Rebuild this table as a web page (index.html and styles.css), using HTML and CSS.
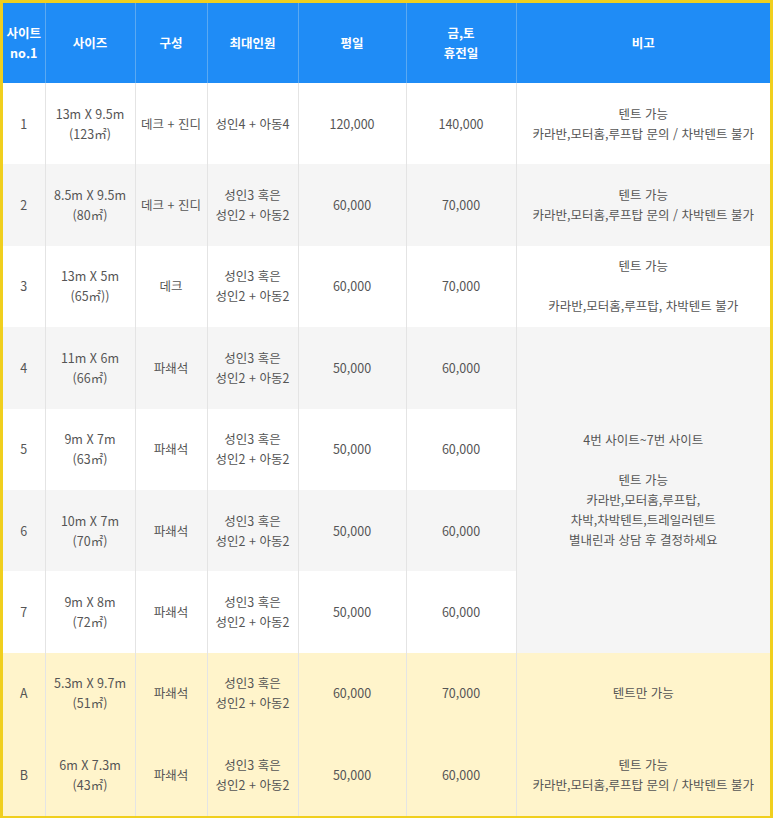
FILE: index.html
```html
<!DOCTYPE html>
<html lang="ko">
<head>
<meta charset="utf-8">
<link rel="stylesheet" href="styles.css">
</head>
<body>
<div class="frame">
<table class="price">
  <colgroup>
    <col class="c1"><col class="c2"><col class="c3"><col class="c4"><col class="c5"><col class="c6"><col class="c7">
  </colgroup>
  <thead>
    <tr>
      <th>사이트<br>no.1</th>
      <th>사이즈</th>
      <th>구성</th>
      <th>최대인원</th>
      <th>평일</th>
      <th>금,토<br>휴전일</th>
      <th>비고</th>
    </tr>
  </thead>
  <tbody>
    <tr class="white">
      <td>1</td>
      <td>13m X 9.5m<br>(123㎡)</td>
      <td>데크 + 진디</td>
      <td>성인4 + 아동4</td>
      <td>120,000</td>
      <td>140,000</td>
      <td>텐트 가능<br>카라반,모터홈,루프탑 문의 / 차박텐트 불가</td>
    </tr>
    <tr class="gray">
      <td>2</td>
      <td>8.5m X 9.5m<br>(80㎡)</td>
      <td>데크 + 진디</td>
      <td>성인3 혹은<br>성인2 + 아동2</td>
      <td>60,000</td>
      <td>70,000</td>
      <td>텐트 가능<br>카라반,모터홈,루프탑 문의 / 차박텐트 불가</td>
    </tr>
    <tr class="white">
      <td>3</td>
      <td>13m X 5m<br>(65㎡))</td>
      <td>데크</td>
      <td>성인3 혹은<br>성인2 + 아동2</td>
      <td>60,000</td>
      <td>70,000</td>
      <td>텐트 가능<br><br>카라반,모터홈,루프탑, 차박텐트 불가</td>
    </tr>
    <tr class="gray">
      <td>4</td>
      <td>11m X 6m<br>(66㎡)</td>
      <td>파쇄석</td>
      <td>성인3 혹은<br>성인2 + 아동2</td>
      <td>50,000</td>
      <td>60,000</td>
      <td rowspan="4" class="merged">4번 사이트~7번 사이트<br><br>텐트 가능<br>카라반,모터홈,루프탑,<br>차박,차박텐트,트레일러텐트<br>별내린과 상담 후 결정하세요</td>
    </tr>
    <tr class="white">
      <td>5</td>
      <td>9m X 7m<br>(63㎡)</td>
      <td>파쇄석</td>
      <td>성인3 혹은<br>성인2 + 아동2</td>
      <td>50,000</td>
      <td>60,000</td>
    </tr>
    <tr class="gray">
      <td>6</td>
      <td>10m X 7m<br>(70㎡)</td>
      <td>파쇄석</td>
      <td>성인3 혹은<br>성인2 + 아동2</td>
      <td>50,000</td>
      <td>60,000</td>
    </tr>
    <tr class="white">
      <td>7</td>
      <td>9m X 8m<br>(72㎡)</td>
      <td>파쇄석</td>
      <td>성인3 혹은<br>성인2 + 아동2</td>
      <td>50,000</td>
      <td>60,000</td>
    </tr>
    <tr class="yellow">
      <td>A</td>
      <td>5.3m X 9.7m<br>(51㎡)</td>
      <td>파쇄석</td>
      <td>성인3 혹은<br>성인2 + 아동2</td>
      <td>60,000</td>
      <td>70,000</td>
      <td>텐트만 가능</td>
    </tr>
    <tr class="yellow">
      <td>B</td>
      <td>6m X 7.3m<br>(43㎡)</td>
      <td>파쇄석</td>
      <td>성인3 혹은<br>성인2 + 아동2</td>
      <td>50,000</td>
      <td>60,000</td>
      <td>텐트 가능<br>카라반,모터홈,루프탑 문의 / 차박텐트 불가</td>
    </tr>
  </tbody>
</table>
</div>
</body>
</html>
```

FILE: styles.css
```css
html, body {
  margin: 0;
  padding: 0;
  background: #ffffff;
}

.frame {
  width: 767px;
  border-style: solid;
  border-color: #f0cf1e;
  border-width: 3px 3px 2px 3px;
  overflow: hidden;
}

.price {
  width: 767px;
  border-collapse: collapse;
  table-layout: fixed;
  font-family: "Noto Sans CJK KR", "Noto Sans", sans-serif;
  font-size: 12.5px;
  line-height: 20px;
  color: #555555;
  text-align: center;
}

.c1 { width: 42px; }
.c2 { width: 90px; }
.c3 { width: 72px; }
.c4 { width: 91px; }
.c5 { width: 108px; }
.c6 { width: 110px; }
.c7 { width: 254px; }

.price th {
  height: 80px;
  padding: 0;
  background: #1f8cf6;
  color: #ffffff;
  font-weight: 700;
  font-size: 12.5px;
  border-left: 1px solid #5aa9f2;
  vertical-align: middle;
}

.price th:first-child {
  border-left: none;
}

.price td {
  height: 81.4px;
  padding: 0;
  border: 1px solid #e4e4e4;
  border-top: none;
  border-bottom: none;
  vertical-align: middle;
}

.price td:first-child {
  border-left: none;
}

.price td:last-child {
  border-right: none;
}

.white td { background: #ffffff; }
.gray td { background: #f5f5f5; }
.yellow td { background: #fff4cb; }

.price td.merged {
  background: #f5f5f5;
  border-right: none;
}
```
